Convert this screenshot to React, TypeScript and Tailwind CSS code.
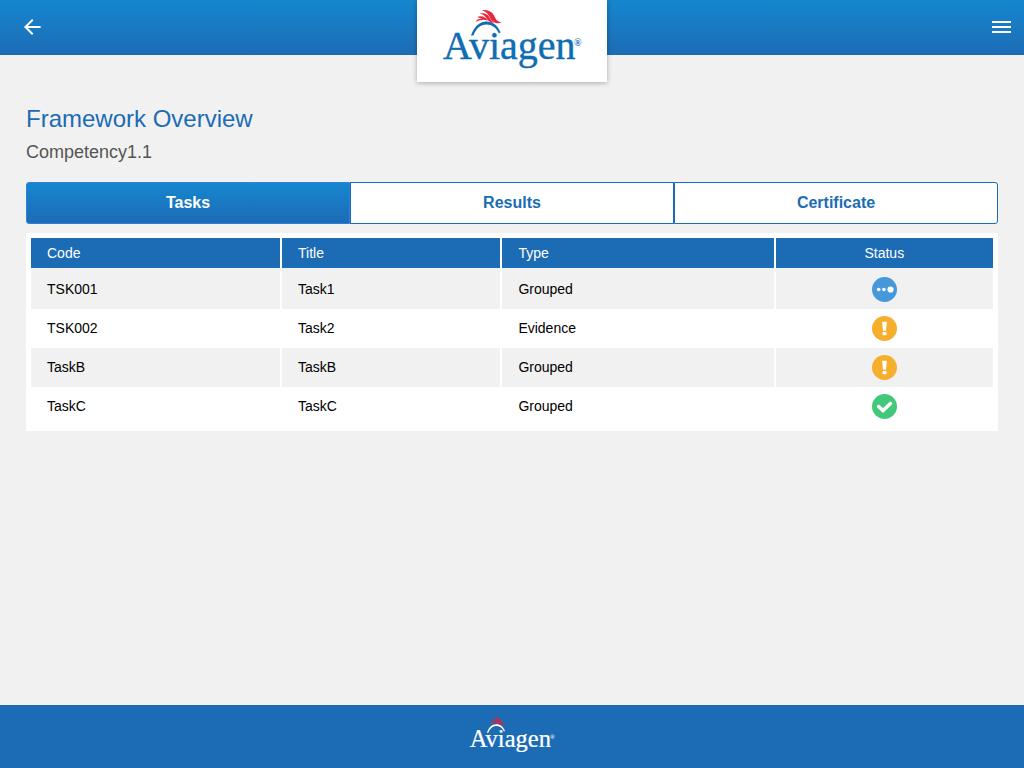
import React from "react";

type Status = "progress" | "attention" | "done";

interface Task {
  code: string;
  title: string;
  type: string;
  status: Status;
}

const tasks: Task[] = [
  { code: "TSK001", title: "Task1", type: "Grouped", status: "progress" },
  { code: "TSK002", title: "Task2", type: "Evidence", status: "attention" },
  { code: "TaskB", title: "TaskB", type: "Grouped", status: "attention" },
  { code: "TaskC", title: "TaskC", type: "Grouped", status: "done" },
];

function Logo({ className, crest }: { className: string; crest: string }) {
  return (
    <svg viewBox="0 0 140 62" className={`overflow-visible ${className}`} role="img" aria-label="Aviagen">
      <g className={crest}>
        <path d="M40 2.2C46 1.4 50.5 4 52.3 8C53.8 11.6 55.8 14 59.5 14.6C55 16.2 50.8 14.6 48.8 11C46.8 6.8 45 4 40 2.2Z" />
        <path d="M37.8 5.6C43 4.2 46.6 7 48.2 10.4C49.4 12.6 50.6 13.6 52.6 14.8C48.4 15 46.2 13 44.8 10.8C43 8 41.2 6.2 37.8 5.6Z" />
        <path d="M35 9C40 7 43.6 9 45.8 12.6C41.8 12.2 39 10 35 9Z" />
        <path d="M33.6 13.8C35.4 10.6 39 10 42.6 12C39.4 12 36.6 12.4 33.6 13.8Z" />
      </g>
      <path
        fill="currentColor"
        d="M29 27.4C31.9 19 37.4 13.5 44.4 13.5C51.2 13.5 55.9 17.8 58.6 24.6L56.9 25.2C53.7 19.3 50 16.5 44.4 16.5C38.6 16.5 34.2 20.4 31.4 27.4Z"
      />
      <text
        x="1"
        y="51"
        fill="currentColor"
        stroke="currentColor"
        strokeWidth="0.4"
        className="font-['Liberation_Serif',serif] text-[40px]"
      >
        Aviagen
      </text>
      <text x="132" y="38" fill="currentColor" className="font-['Liberation_Serif',serif] text-[10px] font-bold">
        ®
      </text>
    </svg>
  );
}

function StatusIcon({ status }: { status: Status }) {
  if (status === "progress") {
    return (
      <svg viewBox="0 0 25 25" className="mx-auto block size-[25px]" role="img" aria-label="In progress">
        <circle cx="12.5" cy="12.5" r="12.5" fill="#4599db" />
        <g fill="#fff">
          <circle cx="6.7" cy="12.5" r="1.8" />
          <circle cx="11.9" cy="12.5" r="1.8" />
          <circle cx="18.5" cy="12.5" r="3.1" />
        </g>
      </svg>
    );
  }
  if (status === "attention") {
    return (
      <svg viewBox="0 0 25 25" className="mx-auto block size-[25px]" role="img" aria-label="Needs attention">
        <circle cx="12.5" cy="12.5" r="12.5" fill="#f6ae2d" />
        <path d="M10.1 5.8H14.9L14 14.8H11Z" fill="#fff" />
        <rect x="10.5" y="16" width="4" height="3.3" rx="0.8" fill="#fff" />
      </svg>
    );
  }
  return (
    <svg viewBox="0 0 25 25" className="mx-auto block size-[25px]" role="img" aria-label="Complete">
      <circle cx="12.5" cy="12.5" r="12.5" fill="#41c87a" />
      <path d="M6.6 12.5L11 16.6L18.5 9.4" fill="none" stroke="#fff" strokeWidth="3.5" strokeLinecap="round" />
    </svg>
  );
}

const headCell =
  "h-8 border-b-2 border-b-[#f1f1f1] bg-[#1c6cb5] px-4 py-0 font-normal text-white [&:not(:last-child)]:border-r-2 [&:not(:last-child)]:border-r-white";
const textCell = "h-[39px] border-r-2 border-r-white px-4 pt-0 pb-0.5";

export default function App() {
  return (
    <div className="flex min-h-screen flex-col bg-[#f1f1f1] font-['Liberation_Sans',Arial,sans-serif] text-black">
      <header className="relative flex h-[55px] items-center justify-between bg-linear-to-b from-[#1487cf] to-[#1c6cb5] pr-[11px] pb-0.5 pl-5 text-white">
        <button type="button" aria-label="Back">
          <svg viewBox="0 0 24 24" className="block size-6" fill="currentColor">
            <path d="M20.6 11H7.83l5.59-5.59L12 4l-8 8 8 8 1.41-1.41L7.83 13H20.6v-2z" />
          </svg>
        </button>
        <div className="absolute inset-x-0 top-0 mx-auto flex h-[82px] w-[190px] justify-center bg-white pt-2 shadow-[0_1px_5px_rgba(0,0,0,0.3)]">
          <Logo className="h-[62px] w-[140px] text-[#0f6db3]" crest="fill-[#e8283c]" />
        </div>
        <button type="button" aria-label="Menu">
          <svg viewBox="0 0 24 24" className="block size-6" fill="currentColor">
            <path d="M3 18h19v-2H3v2zm0-5h19v-2H3v2zm0-7v2h19V6H3z" />
          </svg>
        </button>
      </header>

      <main className="flex-1 px-[26px] pt-12 pb-8">
        <h1 className="text-2xl leading-8 text-[#1c6cb5]">Framework Overview</h1>
        <p className="mt-[5px] text-lg leading-6 text-[#555555]">Competency1.1</p>

        <div role="tablist" className="mt-[18px] grid grid-cols-3 text-base leading-6 font-bold text-[#1c6cb5]">
          <button
            type="button"
            role="tab"
            aria-selected="true"
            className="h-[42px] rounded-l-[3px] border border-[#2f7fe0] bg-linear-to-b from-[#1487cf] to-[#1c6cb5] text-white"
          >
            Tasks
          </button>
          <button type="button" role="tab" aria-selected="false" className="h-[42px] border border-[#1c6cb5] bg-white">
            Results
          </button>
          <button
            type="button"
            role="tab"
            aria-selected="false"
            className="h-[42px] rounded-r-[3px] border border-[#1c6cb5] bg-white"
          >
            Certificate
          </button>
        </div>

        <div className="mt-[9px] bg-white p-[5px]">
          <table className="w-full table-fixed border-separate border-spacing-0 text-left text-sm">
            <thead>
              <tr>
                <th scope="col" className={`${headCell} w-[26.1%]`}>Code</th>
                <th scope="col" className={`${headCell} w-[22.9%]`}>Title</th>
                <th scope="col" className={`${headCell} w-[28.4%]`}>Type</th>
                <th scope="col" className={`${headCell} text-center`}>Status</th>
              </tr>
            </thead>
            <tbody>
              {tasks.map((task) => (
                <tr key={task.code} className="odd:bg-[#f1f1f1]">
                  <td className={textCell}>{task.code}</td>
                  <td className={textCell}>{task.title}</td>
                  <td className={textCell}>{task.type}</td>
                  <td className="h-[39px] px-4 py-0">
                    <StatusIcon status={task.status} />
                  </td>
                </tr>
              ))}
            </tbody>
          </table>
        </div>
      </main>

      <footer className="flex h-[63px] items-center justify-center bg-[#1c6cb5] pb-1">
        <Logo className="h-[38px] w-[86px] text-white" crest="fill-[#c8284e]" />
      </footer>
    </div>
  );
}
